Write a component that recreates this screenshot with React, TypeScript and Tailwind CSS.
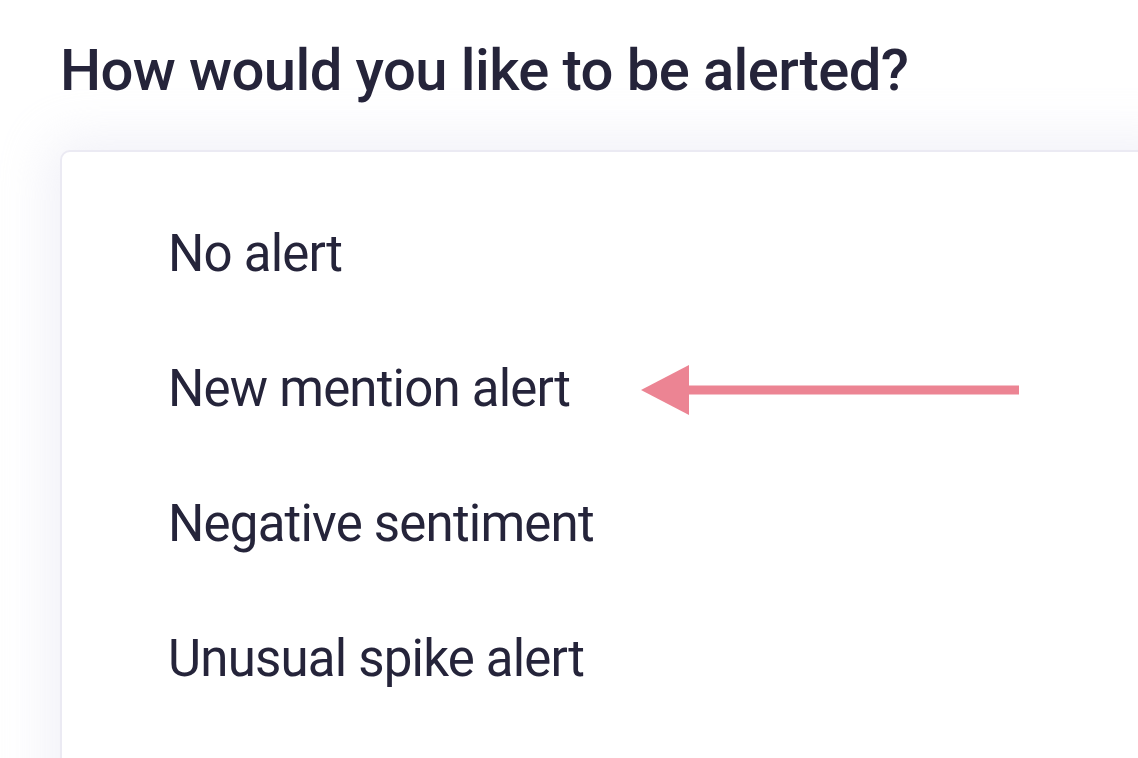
import React from 'react';

const options = ['No alert', 'New mention alert', 'Negative sentiment', 'Unusual spike alert'];

export default function App() {
  return (
    <div className="w-[1138px] h-[758px] overflow-hidden bg-white font-['Roboto',sans-serif] text-[#25243a]">
      <h1 className="pl-[60px] pt-[40px] text-[58px] leading-[60px] font-medium tracking-[-0.6px]">
        How would you like to be alerted?
      </h1>

      <div className="ml-[60px] mt-[50px] w-[1120px] h-[700px] bg-white rounded-[10px] border-2 border-[#ebeaf3] shadow-[0_0_50px_12px_rgba(225,224,240,0.45)] pt-[35px]">
        {options.map((label, i) => (
          <div key={label} className="relative h-[135px] flex items-center pl-[106px] text-[51px] tracking-[-0.8px] font-normal">
            {label}
            {i === 1 && (
              <svg
                className="absolute left-[579px] top-1/2 -translate-y-1/2"
                width="380"
                height="52"
                viewBox="0 0 380 52"
              >
                <polygon points="0,26 48,1 48,51" fill="#ec8493" />
                <rect x="46" y="21.5" width="332" height="9" fill="#ec8493" />
              </svg>
            )}
          </div>
        ))}
      </div>
    </div>
  );
}
